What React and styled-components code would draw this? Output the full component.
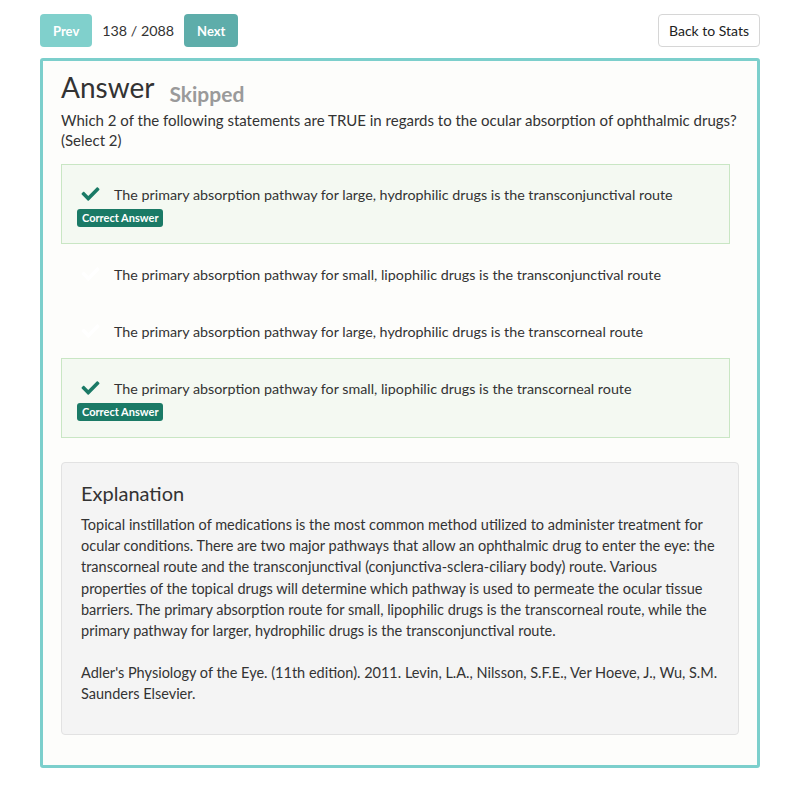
import React from "react";
import styled, { createGlobalStyle } from "styled-components";
import { FaCheck } from "react-icons/fa";

const Global = createGlobalStyle`
  html, body { margin: 0; padding: 0; background: #ffffff; }
  body { font-family: "Lato", "Open Sans", sans-serif; color: #333; }
  * { box-sizing: border-box; }
`;

const Page = styled.div`
  width: 720px;
  margin: 0 auto;
  padding-top: 14px;
  padding-bottom: 24px;
`;

const TopBar = styled.div`
  display: flex;
  align-items: center;
  justify-content: space-between;
  height: 33px;
  margin-bottom: 11px;
`;

const Pager = styled.div`
  display: flex;
  align-items: center;
  gap: 10px;
`;

const NavButton = styled.button`
  height: 33px;
  padding: 0 13px;
  border: none;
  border-radius: 4px;
  font-family: inherit;
  font-weight: 700;
  font-size: 13px;
  color: #fff;
  background: ${(p) => (p.$dim ? "#80d0cc" : "#5eadaa")};
  cursor: pointer;
`;

const Counter = styled.span`
  font-size: 14.3px;
  color: #333;
`;

const StatsButton = styled.button`
  height: 33px;
  width: 102px;
  border: 1px solid #d6d6d6;
  border-radius: 4px;
  background: #fff;
  font-family: inherit;
  font-size: 14px;
  color: #222;
`;

const Card = styled.div`
  border: 3px solid #7ccfcc;
  border-radius: 3px;
  background: #fdfdfb;
  padding: 8px 18px 30px 18px;
`;

const TitleRow = styled.div`
  display: flex;
  align-items: baseline;
  gap: 15px;
  margin-bottom: 5px;
`;

const Title = styled.h1`
  margin: 0;
  font-size: 28px;
  font-weight: 400;
  color: #333;
  line-height: 36px;
`;

const Status = styled.span`
  font-size: 21px;
  font-weight: 700;
  color: #9a9a9a;
  position: relative;
  top: 4px;
`;

const Question = styled.p`
  margin: 0 0 14px;
  font-size: 15px;
  line-height: 20px;
  color: #333;
`;

const Options = styled.div`
  display: flex;
  flex-direction: column;
  margin-right: 9px;
  margin-bottom: 24px;
`;

const Option = styled.div`
  border: 1px solid ${(p) => (p.$correct ? "#c9e6c4" : "transparent")};
  background: ${(p) => (p.$correct ? "#f4f9f2" : "transparent")};
  padding: 17px 15px ${(p) => (p.$correct ? "16px" : "14px")} 15px;
`;

const OptionRow = styled.div`
  display: flex;
  align-items: center;
  height: 24px;
  gap: 13px;
`;

const CheckMark = styled(FaCheck)`
  width: 21px;
  height: 18px;
  margin-left: 3px;
  color: ${(p) => (p.$on ? "#1a7a66" : "#ffffff")};
  flex: none;
`;

const OptionText = styled.span`
  font-size: 14.3px;
  color: #333;
`;

const Badge = styled.span`
  display: inline-block;
  margin-top: 1px;
  background: #1a7a66;
  color: #fff;
  font-size: 11px;
  font-weight: 700;
  line-height: 18px;
  padding: 0 5px;
  border-radius: 3px;
`;

const Explanation = styled.div`
  background: #f4f4f4;
  border: 1px solid #e2e2e2;
  border-radius: 4px;
  padding: 17px 19px 29px;
`;

const ExplanationTitle = styled.h3`
  margin: 0 0 8px;
  font-size: 20px;
  font-weight: 400;
  color: #333;
  line-height: 26px;
`;

const Paragraph = styled.p`
  margin: 0 0 21px;
  font-size: 14.5px;
  line-height: 21.2px;
  color: #333;
  &:last-child { margin-bottom: 0; }
`;

const options = [
  { text: "The primary absorption pathway for large, hydrophilic drugs is the transconjunctival route", correct: true },
  { text: "The primary absorption pathway for small, lipophilic drugs is the transconjunctival route", correct: false },
  { text: "The primary absorption pathway for large, hydrophilic drugs is the transcorneal route", correct: false },
  { text: "The primary absorption pathway for small, lipophilic drugs is the transcorneal route", correct: true },
];

export default function App() {
  return (
    <>
      <Global />
      <Page>
        <TopBar>
          <Pager>
            <NavButton $dim>Prev</NavButton>
            <Counter>138 / 2088</Counter>
            <NavButton>Next</NavButton>
          </Pager>
          <StatsButton>Back to Stats</StatsButton>
        </TopBar>
        <Card>
          <TitleRow>
            <Title>Answer</Title>
            <Status>Skipped</Status>
          </TitleRow>
          <Question>
            Which 2 of the following statements are TRUE in regards to the ocular absorption of ophthalmic drugs? (Select 2)
          </Question>
          <Options>
            {options.map((o, i) => (
              <Option key={i} $correct={o.correct}>
                <OptionRow>
                  <CheckMark $on={o.correct} />
                  <OptionText>{o.text}</OptionText>
                </OptionRow>
                {o.correct && <Badge>Correct Answer</Badge>}
              </Option>
            ))}
          </Options>
          <Explanation>
            <ExplanationTitle>Explanation</ExplanationTitle>
            <Paragraph>
              Topical instillation of medications is the most common method utilized to administer treatment for ocular conditions. There are two major pathways that allow an ophthalmic drug to enter the eye: the transcorneal route and the transconjunctival (conjunctiva-sclera-ciliary body) route. Various properties of the topical drugs will determine which pathway is used to permeate the ocular tissue barriers. The primary absorption route for small, lipophilic drugs is the transcorneal route, while the primary pathway for larger, hydrophilic drugs is the transconjunctival route.
            </Paragraph>
            <Paragraph>
              Adler's Physiology of the Eye. (11th edition). 2011. Levin, L.A., Nilsson, S.F.E., Ver Hoeve, J., Wu, S.M. Saunders Elsevier.
            </Paragraph>
          </Explanation>
        </Card>
      </Page>
    </>
  );
}
